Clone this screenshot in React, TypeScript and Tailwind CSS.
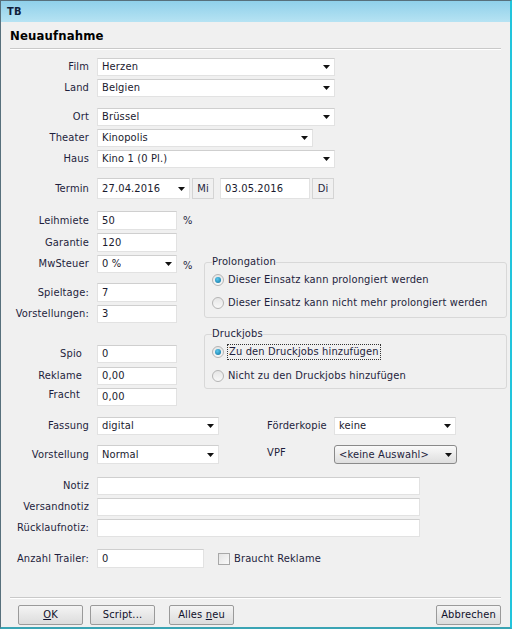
import type { ReactNode } from 'react';

const labelCls = 'w-[96px] shrink-0 pr-[8px] text-right';

function Box({ width, children, className = '' }: { width: string; children?: ReactNode; className?: string }) {
  return (
    <div
      className={`${width} h-full flex items-center bg-white border border-[#e2e2e2] border-t-[#cfcfcf] pl-[4px] text-[#1a1a2e] ${className}`}
    >
      {children}
    </div>
  );
}

function Arrow() {
  return (
    <svg width="7" height="4" viewBox="0 0 7 4" className="ml-auto mr-[4px] shrink-0">
      <path d="M0 0H7L3.5 4Z" fill="#111" />
    </svg>
  );
}

function Select({ width, value }: { width: string; value: string }) {
  return (
    <Box width={width}>
      <span className="truncate">{value}</span>
      <Arrow />
    </Box>
  );
}

function Row({
  label,
  mt,
  h = 'h-[18px]',
  lcls = labelCls,
  children,
}: {
  label: string;
  mt: string;
  h?: string;
  lcls?: string;
  children: ReactNode;
}) {
  return (
    <div className={`flex items-center ${mt} ${h}`}>
      <div className={lcls}>{label}</div>
      {children}
    </div>
  );
}

function Radio({ checked, label, focus = false }: { checked?: boolean; label: string; focus?: boolean }) {
  return (
    <div className="flex items-center h-[16px] gap-[4px]">
      <span className="w-[12px] h-[12px] rounded-full border border-[#b4b4b4] bg-gradient-to-b from-[#e6e6e6] to-[#f8f8f8] flex items-center justify-center">
        {checked ? (
          <span className="w-[6px] h-[6px] rounded-full bg-[radial-gradient(circle_at_40%_35%,#5cc8ee,#0a6f9c)]" />
        ) : null}
      </span>
      <span className={focus ? 'outline outline-1 outline-dotted outline-[#333] px-px' : ''}>{label}</span>
    </div>
  );
}

function Btn({ children, className = '' }: { children: ReactNode; className?: string }) {
  return (
    <div
      className={`w-[65px] h-[20px] flex items-center justify-center rounded-[2px] border border-[#9a9a9a] bg-gradient-to-b from-[#f4f4f4] to-[#dcdcdc] ${className}`}
    >
      {children}
    </div>
  );
}

export default function App() {
  return (
    <div
      className="w-[512px] h-[629px] flex flex-col bg-[#f0f0f0] border border-[#57707c] border-r-2 border-r-[#22c4dc] border-b-2 border-b-[#3aa4b4] text-[11px] leading-[14px] text-[#1e1e3c] tracking-[0.15px] overflow-hidden"
      style={{ fontFamily: '"DejaVu Sans Condensed", "DejaVu Sans", Tahoma, sans-serif' }}
    >
      {/* Titelleiste */}
      <div className="h-[21px] shrink-0 flex items-center pl-[6px] bg-gradient-to-b from-[#8fd0ea] to-[#b6e3f3] font-bold text-[#10203a] text-[11px]">
        TB
      </div>

      <div className="flex flex-col">
        <div className="mt-[6px] pl-[9px] h-[16px] text-[13px] leading-[16px] font-bold text-black">Neuaufnahme</div>
        <div className="mt-[4px] mx-[9px] h-[2px] border-t border-[#c9c9c9] border-b border-b-white" />

        <Row label="Film" mt="mt-[8px]">
          <Select width="w-[238px]" value="Herzen" />
        </Row>
        <Row label="Land" mt="mt-[3px]">
          <Select width="w-[238px]" value="Belgien" />
        </Row>
        <Row label="Ort" mt="mt-[11px]">
          <Select width="w-[238px]" value="Brüssel" />
        </Row>
        <Row label="Theater" mt="mt-[3px]">
          <Select width="w-[216px]" value="Kinopolis" />
        </Row>
        <Row label="Haus" mt="mt-[3px]">
          <Select width="w-[238px]" value="Kino 1 (0 Pl.)" />
        </Row>
        <Row label="Termin" mt="mt-[10px]" h="h-[21px]">
          <Select width="w-[93px]" value="27.04.2016" />
          <div className="ml-[2px] w-[22px] h-full flex items-center justify-center border border-[#d4d4d4] bg-[#f0f0f0]">Mi</div>
          <div className="ml-[6px] h-full flex">
            <Box width="w-[90px]">03.05.2016</Box>
          </div>
          <div className="ml-[2px] w-[22px] h-full flex items-center justify-center border border-[#d4d4d4] bg-[#f0f0f0]">Di</div>
        </Row>

        {/* Mittelteil */}
        <div className="flex mt-[12px]">
          <div className="w-[203px] shrink-0 flex flex-col">
            <Row label="Leihmiete" mt="mt-0" h="h-[19px]">
              <Box width="w-[80px]">50</Box>
              <span className="ml-[6px]">%</span>
            </Row>
            <Row label="Garantie" mt="mt-[3px]" h="h-[19px]">
              <Box width="w-[80px]">120</Box>
            </Row>
            <Row label="MwSteuer" mt="mt-[3px]">
              <Select width="w-[80px]" value="0 %" />
              <span className="ml-[6px] mt-[4px]">%</span>
            </Row>
            <Row label="Spieltage:" mt="mt-[10px]" h="h-[19px]">
              <Box width="w-[80px]">7</Box>
            </Row>
            <Row label="Vorstellungen:" mt="mt-[3px]">
              <Box width="w-[80px]">3</Box>
            </Row>
            <Row label="Spio" mt="mt-[22px]" lcls="w-[96px] shrink-0 pr-[15px] text-right">
              <Box width="w-[80px]">0</Box>
            </Row>
            <Row label="Reklame" mt="mt-[4px]" lcls="w-[96px] shrink-0 pr-[15px] text-right">
              <Box width="w-[80px]">0,00</Box>
            </Row>
            <Row label="Fracht" mt="mt-[3px]" lcls="w-[96px] shrink-0 pr-[17px] text-right -mt-[4px]">
              <Box width="w-[80px]">0,00</Box>
            </Row>
          </div>

          <div className="flex flex-col w-[303px]">
            <fieldset className="mt-[44px] h-[63px] border border-[#d8d8d8] rounded-[3px] px-[7px]">
              <legend className="px-0">Prolongation</legend>
              <div className="mt-[3px] flex flex-col gap-[7px]">
                <Radio checked label="Dieser Einsatz kann prolongiert werden" />
                <Radio label="Dieser Einsatz kann nicht mehr prolongiert werden" />
              </div>
            </fieldset>
            <fieldset className="mt-[9px] h-[62px] border border-[#d8d8d8] rounded-[3px] px-[7px]">
              <legend className="px-0">Druckjobs</legend>
              <div className="mt-[3px] flex flex-col gap-[8px]">
                <Radio checked focus label="Zu den Druckjobs hinzufügen" />
                <Radio label="Nicht zu den Druckjobs hinzufügen" />
              </div>
            </fieldset>
          </div>
        </div>

        <div className="flex items-center mt-[11px] h-[18px]">
          <div className={labelCls}>Fassung</div>
          <Select width="w-[122px]" value="digital" />
          <div className="w-[115px] shrink-0 pl-[48px]">Förderkopie</div>
          <Select width="w-[122px]" value="keine" />
        </div>
        <div className="flex items-center mt-[10px] h-[19px]">
          <div className={labelCls}>Vorstellung</div>
          <Select width="w-[122px]" value="Normal" />
          <div className="w-[115px] shrink-0 pl-[48px] -mt-[4px]">VPF</div>
          <div className="w-[123px] h-full flex items-center pl-[4px] rounded-[3px] border border-[#8a8a8a] bg-gradient-to-b from-[#fafafa] to-[#dedede]">
            <span>&lt;keine Auswahl&gt;</span>
            <Arrow />
          </div>
        </div>

        <Row label="Notiz" mt="mt-[13px]">
          <Box width="w-[323px]" />
        </Row>
        <Row label="Versandnotiz" mt="mt-[3px]">
          <Box width="w-[323px]" />
        </Row>
        <Row label="Rücklaufnotiz:" mt="mt-[3px]">
          <Box width="w-[323px]" />
        </Row>
        <Row label="Anzahl Trailer:" mt="mt-[12px]" h="h-[19px]">
          <Box width="w-[107px]">0</Box>
          <span className="ml-[14px] w-[12px] h-[12px] border border-[#a8a8a8] bg-gradient-to-br from-[#e4e4e4] to-[#fafafa]" />
          <span className="ml-[4px]">Braucht Reklame</span>
        </Row>

        <div className="mt-[29px] mx-[9px] h-[2px] border-t border-[#c9c9c9] border-b border-b-white" />
        <div className="mt-[6px] flex items-center pl-[17px] pr-[9px] text-[#10102a]">
          <Btn>
            <span className="underline">O</span>K
          </Btn>
          <Btn className="ml-[7px]">Script...</Btn>
          <Btn className="ml-[14px]">
            Alles&nbsp;<span className="underline">n</span>eu
          </Btn>
          <Btn className="ml-auto">Abbrechen</Btn>
        </div>
      </div>
    </div>
  );
}
